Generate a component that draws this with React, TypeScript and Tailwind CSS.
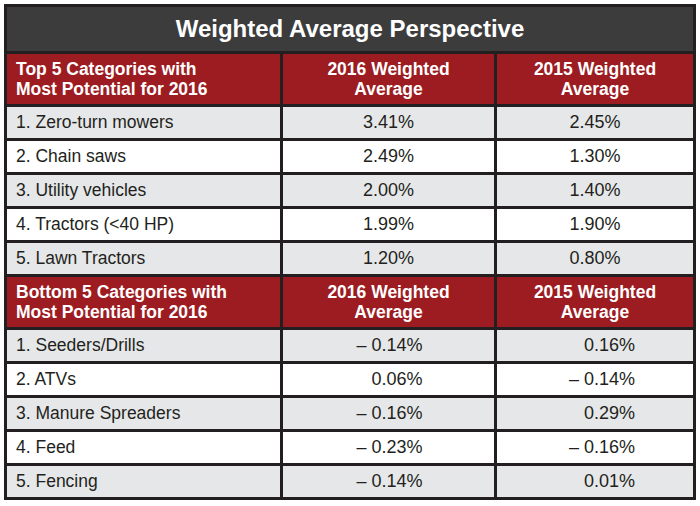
const top = [
  ["1. Zero-turn mowers", "3.41%", "2.45%"],
  ["2. Chain saws", "2.49%", "1.30%"],
  ["3. Utility vehicles", "2.00%", "1.40%"],
  ["4. Tractors (<40 HP)", "1.99%", "1.90%"],
  ["5. Lawn Tractors", "1.20%", "0.80%"],
];

const bottom = [
  ["1. Seeders/Drills", "– 0.14%", "0.16%"],
  ["2. ATVs", "0.06%", "– 0.14%"],
  ["3. Manure Spreaders", "– 0.16%", "0.29%"],
  ["4. Feed", "– 0.23%", "– 0.16%"],
  ["5. Fencing", "– 0.14%", "0.01%"],
];

function Header({ label }: { label: string }) {
  return (
    <>
      <div className="bg-[#9c1c21] text-white font-bold text-[17.5px] leading-[20px] pl-[9px] flex flex-col justify-center">
        <span>{label} Categories with</span>
        <span>Most Potential for 2016</span>
      </div>
      <div className="bg-[#9c1c21] text-white font-bold text-[17.5px] leading-[20px] flex flex-col items-center justify-center">
        <span>2016 Weighted</span>
        <span>Average</span>
      </div>
      <div className="bg-[#9c1c21] text-white font-bold text-[17.5px] leading-[20px] flex flex-col items-center justify-center">
        <span>2015 Weighted</span>
        <span>Average</span>
      </div>
    </>
  );
}

function Rows({ rows, aligned }: { rows: string[][]; aligned?: boolean }) {
  return (
    <>
      {rows.map((r, i) => {
        const bg = i % 2 === 0 ? "bg-[#e6e7e8]" : "bg-white";
        return (
          <div key={r[0]} className="contents">
            <div className={`${bg} pl-[9px] flex items-center`}>{r[0]}</div>
            <div className={`${bg} flex items-center justify-center text-[18px] whitespace-nowrap`}>
              {aligned ? (
                <span className="inline-block w-[68px] text-right">{r[1]}</span>
              ) : (
                r[1]
              )}
            </div>
            <div className={`${bg} flex items-center justify-center text-[18px] whitespace-nowrap`}>
              {aligned ? (
                <span className="inline-block w-[68px] text-right ml-[12px]">{r[2]}</span>
              ) : (
                r[2]
              )}
            </div>
          </div>
        );
      })}
    </>
  );
}

export default function App() {
  return (
    <div className="w-[700px] h-[506px] bg-white p-[4px] font-['Liberation_Sans',Arial,sans-serif] text-[#231f20] text-[17.5px]">
      <div className="w-[692px] bg-[#231f20] p-[3px] grid grid-cols-[273px_211px_196px] gap-[3px] grid-rows-[44px_50px_31px_31px_31px_31px_31px_50px_31px_31px_31px_31px_31px]">
        <div className="col-span-3 bg-[#3c3c3c] text-white font-bold text-[24px] flex items-center justify-center">
          Weighted Average Perspective
        </div>
        <Header label="Top 5" />
        <Rows rows={top} />
        <Header label="Bottom 5" />
        <Rows rows={bottom} aligned />
      </div>
    </div>
  );
}
